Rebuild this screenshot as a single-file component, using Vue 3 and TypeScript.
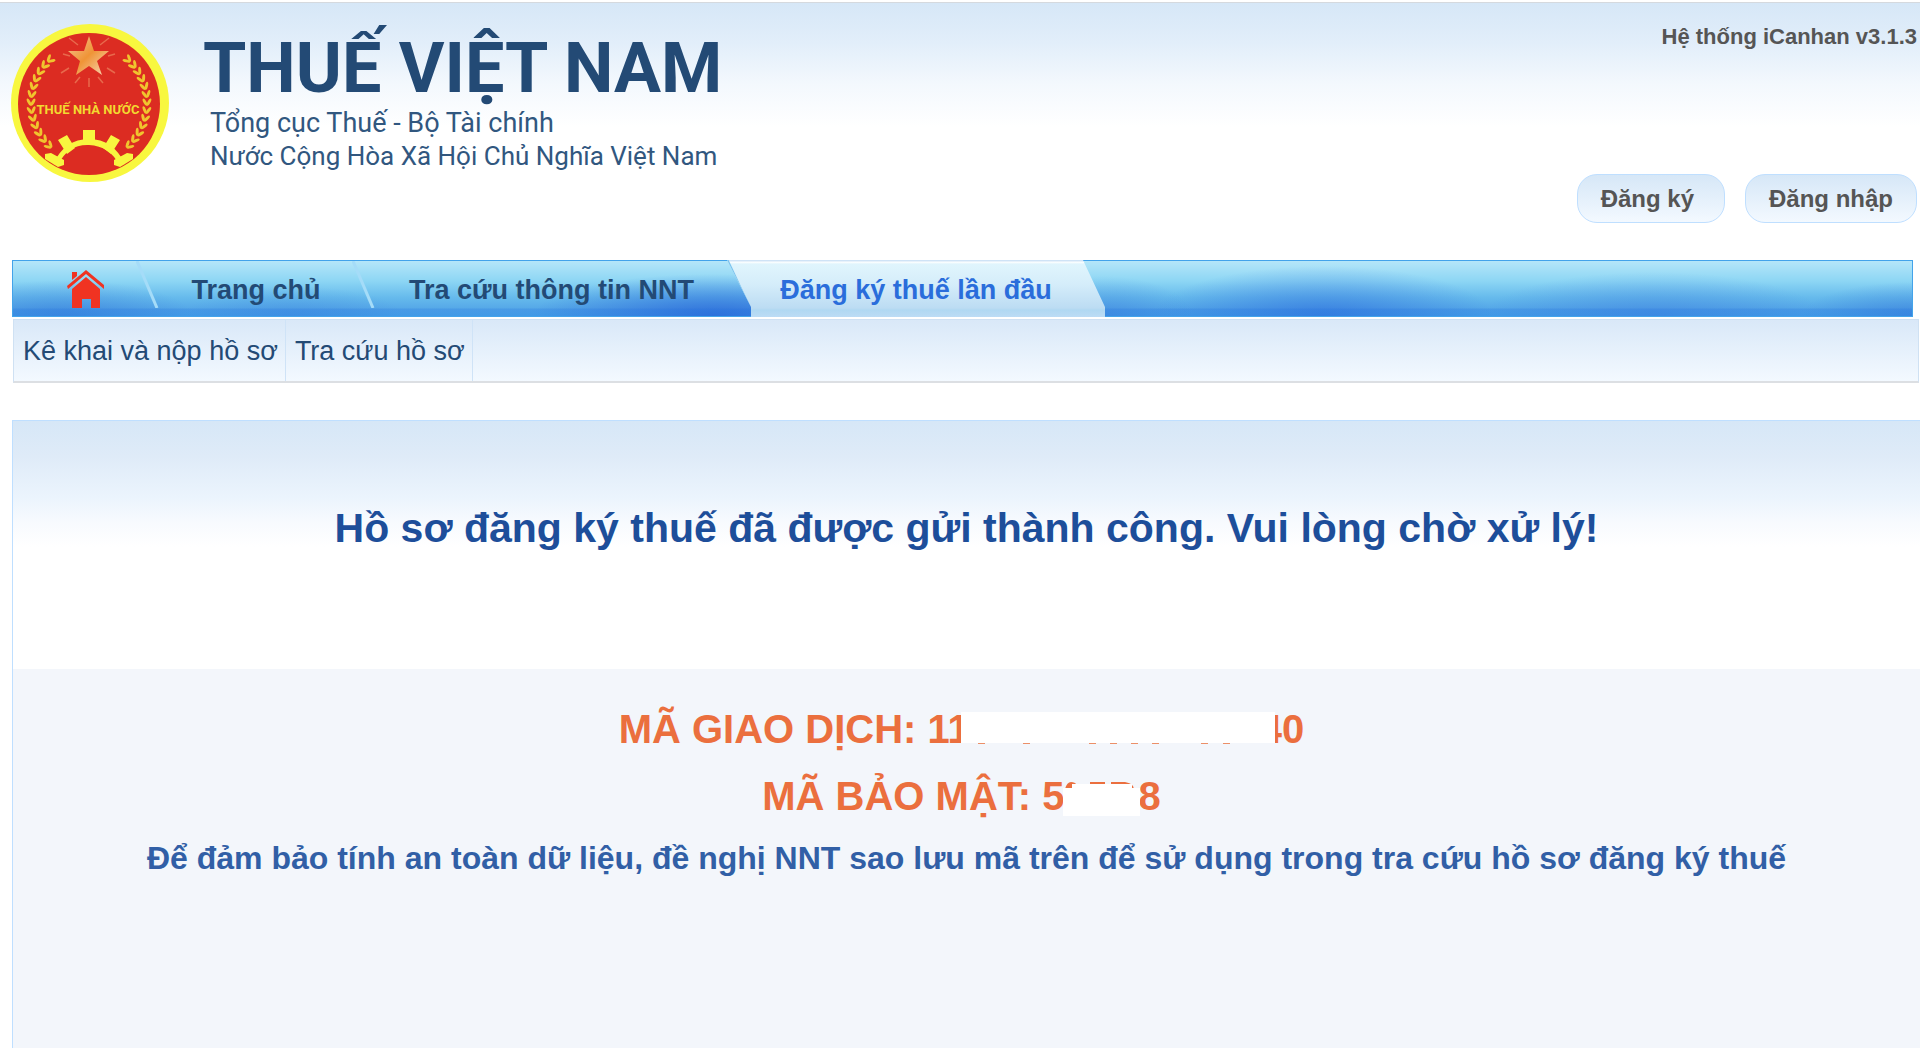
<script setup lang="ts">
interface Tab {
  label: string
  kind: string
}

const tabs: Tab[] = [
  { label: 'Trang chủ', kind: 'tab-home' },
  { label: 'Tra cứu thông tin NNT', kind: 'tab-search' },
  { label: 'Đăng ký thuế lần đầu', kind: 'tab-active' },
]

const subLinks: string[] = ['Kê khai và nộp hồ sơ', 'Tra cứu hồ sơ']

// Leaves of the laurel wreath, placed along an arc on each side of the emblem
interface Leaf {
  x: number
  y: number
  angle: number
}

const leaves: Leaf[] = []
for (let i = 0; i < 13; i++) {
  const degrees = 134 + i * 7.8
  const t = (degrees * Math.PI) / 180
  for (const [radius, tilt] of [
    [57, 28],
    [61, -28],
  ]) {
    leaves.push({
      x: 79 + radius * Math.cos(t),
      y: 79 + radius * Math.sin(t),
      angle: degrees + 90 + tilt,
    })
  }
}
</script>

<template>
  <div class="page">
    <header class="header">
      <a href="#" class="brand">
        <svg class="emblem" viewBox="0 0 158 158" role="img" aria-label="Thuế Nhà Nước">
          <defs>
            <linearGradient id="star" x1="0" y1="0" x2="1" y2="1">
              <stop offset="0" stop-color="#f6c79a" />
              <stop offset="0.5" stop-color="#ef9436" />
              <stop offset="1" stop-color="#f8d9bd" />
            </linearGradient>
          </defs>
          <circle cx="79" cy="79" r="79" fill="#f8f73f" />
          <circle cx="78" cy="80" r="71" fill="#dc2c22" />
          <g v-for="side in [1, -1]" :key="side" :transform="side === 1 ? '' : 'translate(156 0) scale(-1 1)'">
            <ellipse
              v-for="(leaf, i) in leaves"
              :key="i"
              rx="4"
              ry="1.5"
              fill="#f0c52e"
              :transform="`translate(${leaf.x} ${leaf.y}) rotate(${leaf.angle})`"
            />
          </g>
          <g stroke="#e8694c" stroke-width="1.5">
            <path d="M58 14l9 7M98 14l-9 7M50 49l8-5M104 49l-8-5M64 59l5-6M92 59l-5-6M78 54v9M52 30l7 2M104 30l-7 2" />
          </g>
          <path d="M78 12L83 27H98L86 37L91 51L78 42L65 51L69 37L57 27H73Z" fill="url(#star)" />
          <g fill="#f8f73f">
            <path d="M72 106h12v14H72zM47 116l9-5 8 13-8 6zM109 116l-9-5-8 13 8 6zM34 130l6-1 13 7v5l-6 2-13-8zM122 130l-6-1-13 7v5l6 2 13-8z" />
            <path d="M42 140Q54 115 78 115T114 140L108 141Q99 122 78 121T47 141Z" />
          </g>
          <text x="77" y="90" text-anchor="middle" class="emblem-text">THUẾ NHÀ NƯỚC</text>
        </svg>
        <span class="titles">
          <strong class="title">THUẾ VIỆT NAM</strong>
          <span class="subtitle department">Tổng cục Thuế - Bộ Tài chính</span>
          <span class="subtitle">Nước Cộng Hòa Xã Hội Chủ Nghĩa Việt Nam</span>
        </span>
      </a>
      <div class="account">
        <span class="version">Hệ thống iCanhan v3.1.3</span>
        <div class="account-buttons">
          <button type="button" class="pill pill-register">Đăng ký</button>
          <button type="button" class="pill">Đăng nhập</button>
        </div>
      </div>
    </header>

    <nav class="main-nav">
      <a href="#" class="home" aria-label="Trang chủ">
        <svg class="home-icon" viewBox="0 0 37 38">
          <path d="M0 16L19 0l18 15v4L19 4 1 19zM5 2h5v4l-5 4z" fill="#f03322" />
          <path d="M19 7l14 12v19h-9v-9h-9v9H5V19z" fill="#f03322" />
        </svg>
        <svg class="divider" viewBox="0 0 24 47"><path d="M1 0L21 47" stroke="#a5dcf8" stroke-width="3" /></svg>
      </a>
      <a v-for="tab in tabs" :key="tab.label" href="#" class="tab" :class="tab.kind">
        {{ tab.label }}
        <svg v-if="tab.kind === 'tab-home'" class="divider" viewBox="0 0 24 47">
          <path d="M1 0L21 47" stroke="#a5dcf8" stroke-width="3" />
        </svg>
        <svg v-if="tab.kind === 'tab-active'" class="edge" viewBox="0 0 24 47">
          <path d="M0 0L22 47" stroke="#7cc4ee" stroke-width="3" />
        </svg>
      </a>
    </nav>

    <nav class="sub-nav">
      <a v-for="link in subLinks" :key="link" href="#" class="sub-link">{{ link }}</a>
    </nav>

    <main class="panel">
      <div class="panel-head">
        <h1>Hồ sơ đăng ký thuế đã được gửi thành công. Vui lòng chờ xử lý!</h1>
      </div>
      <div class="panel-body">
        <p class="code">
          <span>MÃ GIAO DỊCH: 11</span>
          <svg class="mask mask-long" viewBox="0 0 314 33" aria-hidden="true">
            <path d="M0 0h314v31H0z" fill="#fff" />
            <path
              d="M17 31.5h7M62 31.5h7M128 31.5h7M149 31.5h7M170 31.5h7M191 31.5h7M240 31.5h7M262 31.5h7"
              stroke="#eb8f68"
            />
          </svg>
          <span>40</span>
        </p>
        <p class="code">
          <span>MÃ BẢO MẬT: 5</span>
          <svg class="mask mask-short" viewBox="0 0 77 34" aria-hidden="true">
            <path d="M2 7Q4 0 8 0t6 3v4zM27 0h15v3H27zM48 0h14q6 1 8 4l1 3h-4V3H48z" fill="#eb6f3e" />
            <path d="M0 6h9V2h60v4h8v28H0z" fill="#fff" />
          </svg>
          <span>8</span>
        </p>
        <p class="note">
          Để đảm bảo tính an toàn dữ liệu, đề nghị NNT sao lưu mã trên để sử dụng trong tra cứu hồ sơ đăng ký thuế
        </p>
      </div>
    </main>
  </div>
</template>

<style>
body {
  background: #fff;
}
</style>

<style scoped>
.page {
  display: flex;
  flex-direction: column;
  min-height: 100vh;
  box-sizing: border-box;
  padding-top: 2px;
  overflow: hidden;
  font-family: 'Liberation Sans', Arial, sans-serif;
}
a {
  color: inherit;
  text-decoration: none;
}
.header {
  display: flex;
  justify-content: space-between;
  height: 258px;
  box-sizing: border-box;
  border-top: 1px solid #d5d9de;
  padding: 0 3px 0 11px;
  background: linear-gradient(#d6e7f7, #e2eefa 40px, #f3f8fd 80px, #fff 124px);
}
.brand {
  display: flex;
  align-items: flex-start;
  gap: 34px;
}
.emblem {
  width: 158px;
  height: 158px;
  margin-top: 21px;
}
.emblem-text {
  font: bold 13px Roboto, sans-serif;
  fill: #f3d930;
}
.titles {
  display: flex;
  flex-direction: column;
  padding-top: 26px;
  color: #234a75;
  font-family: Roboto, sans-serif;
}
.title {
  font-size: 70px;
  line-height: 78px;
}
.subtitle {
  padding-left: 7px;
  font-size: 26px;
  line-height: 33px;
  color: #31577f;
}
.department {
  font-size: 27px;
}
.account {
  display: flex;
  flex-direction: column;
  align-items: flex-end;
  font-weight: bold;
  color: #555;
}
.version {
  padding-top: 20px;
  font-size: 22px;
  line-height: 28px;
}
.account-buttons {
  display: flex;
  gap: 20px;
  margin-top: 123px;
}
.pill {
  height: 49px;
  border: 1px solid #bfdfff;
  border-radius: 20px;
  padding: 0 23px;
  background: linear-gradient(#d6e7f7, #f3f9ff);
  color: inherit;
  font: bold 24px 'Liberation Sans', Arial, sans-serif;
}
.pill-register {
  padding-right: 30px;
}
.main-nav {
  display: flex;
  height: 57px;
  box-sizing: border-box;
  margin: 0 7px 0 12px;
  border: 1px solid #43a3ea;
  background:
    linear-gradient(transparent 47px, rgb(36 110 220 / 25%) 48px),
    radial-gradient(ellipse 130px 36px at 50px 100%, rgb(47 114 216 / 50%), transparent),
    radial-gradient(ellipse 110px 30px at 280px 100%, rgb(60 130 222 / 40%), transparent),
    radial-gradient(ellipse 180px 42px at 700px 100%, rgb(39 100 216 / 80%), transparent),
    radial-gradient(ellipse 90px 40px at 1090px 100%, rgb(59 127 221 / 50%), transparent),
    radial-gradient(ellipse 170px 50px at 1310px 100%, rgb(40 104 220 / 60%), transparent),
    radial-gradient(ellipse 170px 44px at 1640px 100%, rgb(60 125 223 / 50%), transparent),
    radial-gradient(ellipse 110px 34px at 100% 100%, rgb(47 114 216 / 50%), transparent),
    linear-gradient(#b5e6f9, #8dd6f4 20px, #67bbec 36px, #56a9e8 47px, #4aa9ea);
  color: #234a75;
  font-size: 27px;
  font-weight: bold;
}
.home {
  position: relative;
  display: flex;
  align-items: center;
  width: 135px;
  box-sizing: border-box;
  padding-left: 54px;
}
.home-icon {
  width: 37px;
  height: 38px;
}
.divider {
  position: absolute;
  top: 0;
  right: -12px;
  width: 24px;
  height: 47px;
}
.edge {
  position: absolute;
  top: 0;
  left: 0;
  width: 24px;
  height: 47px;
}
.tab {
  position: relative;
  display: flex;
  align-items: center;
  justify-content: center;
  box-sizing: border-box;
  padding-top: 3px;
  white-space: nowrap;
}
.tab-home {
  width: 216px;
}
.tab-search {
  width: 375px;
}
.tab-active {
  width: 378px;
  margin: -1px -12px;
  background: linear-gradient(#cfe3f6 1px, #fff 2px, #e0f5fd 4px, #d5edfa 24px, #bcdcf3 48px, #b0d8f2 50px, #bcdcf5);
  clip-path: polygon(0 0, 356px 0, 100% 47px, 100% 100%, 24px 100%, 24px 47px);
  color: #2a6ddb;
}
.sub-nav {
  display: flex;
  height: 64px;
  box-sizing: border-box;
  margin: 2px 1px 0 13px;
  border: 1px solid #cfe1f3;
  border-bottom: 2px solid #dcdfe3;
  background: linear-gradient(#d9e8f8, #f3f9ff);
  color: #234a75;
  font-size: 27px;
}
.sub-link {
  display: flex;
  align-items: center;
  padding: 2px 7px 0 9px;
  border-right: 1px solid #cfe3f7;
}
.panel {
  flex: 1;
  display: flex;
  flex-direction: column;
  margin: 37px 0 0 12px;
  border-top: 1px solid #bfdfff;
  border-left: 1px solid #bfdfff;
  text-align: center;
  font-weight: bold;
}
.panel-head {
  height: 248px;
  background: linear-gradient(#d6e7f7, #dfebf8 36px, #ebf4fd 76px, #f7fafe 100px, #fff 126px);
}
h1 {
  margin: 0;
  padding-top: 83px;
  font-size: 41px;
  line-height: 48px;
  color: #1d4e9a;
}
.panel-body {
  flex: 1;
  padding-top: 27px;
  background: #f3f6fb;
}
p {
  margin: 0;
}
.code {
  display: flex;
  align-items: flex-start;
  justify-content: center;
  padding-right: 10px;
  font-size: 40px;
  line-height: 67px;
  color: #eb6f3e;
}
.mask {
  position: relative;
  flex: none;
}
.mask-long {
  width: 314px;
  height: 33px;
  margin: 16px -15px 0 -9px;
}
.mask-short {
  width: 77px;
  height: 34px;
  margin: 19px -2px 0 -1px;
}
.note {
  font-size: 32px;
  line-height: 56px;
  color: #315fa6;
}
</style>
